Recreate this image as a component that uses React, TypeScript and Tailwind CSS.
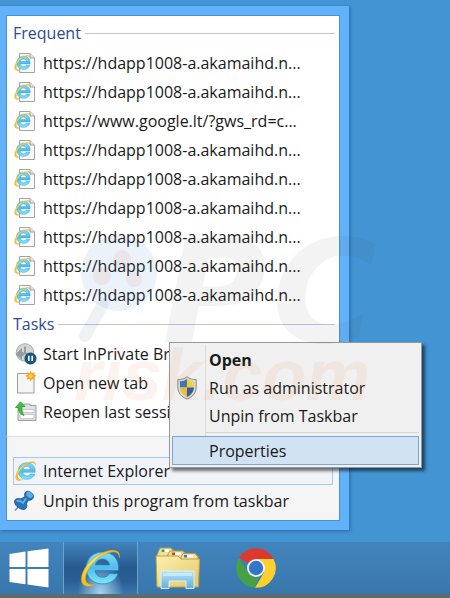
import type { ReactNode } from "react";

const frequent = [
  "https://hdapp1008-a.akamaihd.n...",
  "https://hdapp1008-a.akamaihd.n...",
  "https://www.google.lt/?gws_rd=c...",
  "https://hdapp1008-a.akamaihd.n...",
  "https://hdapp1008-a.akamaihd.n...",
  "https://hdapp1008-a.akamaihd.n...",
  "https://hdapp1008-a.akamaihd.n...",
  "https://hdapp1008-a.akamaihd.n...",
  "https://hdapp1008-a.akamaihd.n...",
];

function IeShape() {
  return (
    <>
      <defs>
        <linearGradient id="ie-blue" x1="0" y1="0" x2="0" y2="1">
          <stop offset="0" stopColor="#7fdcf8" />
          <stop offset="0.5" stopColor="#4fbdec" />
          <stop offset="1" stopColor="#7be6fb" />
        </linearGradient>
        <linearGradient id="ie-gold" x1="0" y1="1" x2="1" y2="0">
          <stop offset="0" stopColor="#f3b81c" />
          <stop offset="0.5" stopColor="#fbe25a" />
          <stop offset="1" stopColor="#eeb41d" />
        </linearGradient>
      </defs>
      <path
        fill="url(#ie-blue)"
        stroke="#2184bd"
        strokeWidth="0.7"
        fillRule="evenodd"
        d="M22 5C12.500 5 6 11.500 6 20.500S12.500 36 22 36C29.500 36 35 32 37 26H28.500C27.300 28.500 25 29.500 22 29.500C18 29.500 15 27 14.800 23H37.500C38.800 12.500 32.500 5 22 5ZM15 17.500C15.700 14 18.300 11.800 22 11.800S28.400 14 28.800 17.500Z"
      />
      <path
        fill="url(#ie-gold)"
        stroke="#cf9a17"
        strokeWidth="0.5"
        d="M38.500 10.500C40 4 34 1.500 25 4.500C14 8 3.500 18.500 1.500 29C0 38 7 40.500 14.500 36.500C8.500 37.500 4.500 35 5.500 29C7 20 16 10 25.500 6.500C33 3.700 38 4.500 38.500 10.500Z"
      />
    </>
  );
}

function IeIcon({ className }: { className: string }) {
  return (
    <svg viewBox="0 0 41 41" className={className} aria-hidden="true">
      <IeShape />
    </svg>
  );
}

function PageIcon() {
  return (
    <svg viewBox="0 0 22 22" className="size-[22px]" aria-hidden="true">
      <path d="M5.500 1.500H16L20.500 6V20.500H5.500Z" fill="#fafafa" stroke="#a3a3a3" />
      <path d="M16 1.500V6H20.500" fill="#e5e5e5" stroke="#a3a3a3" />
      <g transform="translate(0 2) scale(0.43)">
        <IeShape />
      </g>
    </svg>
  );
}

function InPrivateIcon() {
  return (
    <svg viewBox="0 0 22 22" className="size-[22px] overflow-visible" aria-hidden="true">
      <circle cx="12" cy="9.500" r="8.800" fill="#d3d6d8" stroke="#a7abad" />
      <path d="M12 3.500V10L16 12" fill="none" stroke="#8a9094" strokeWidth="1.600" />
      <path d="M2.500 11L9 5V8.500L12.500 11L9 13.500V17Z" fill="#979b9e" />
      <circle cx="17.500" cy="15.500" r="5.500" fill="#145a87" stroke="#0b4166" />
      <path d="M15.800 12.800V18M19.200 12.800V18" stroke="#fff" strokeWidth="1.600" />
    </svg>
  );
}

function NewTabIcon() {
  return (
    <svg viewBox="0 0 22 22" className="size-[22px] overflow-visible" aria-hidden="true">
      <path d="M4.500 1.500H21V21H4.500Z" fill="#f5f5f5" stroke="#9c9c9c" />
      <path
        d="M17.500 -1.500L18.800 1.200L21.500 0L20.800 2.800L23.800 3.800L20.900 5L22 7.800L19 6.900L17.700 9.500L16.500 6.700L13.500 7.800L14.700 5L12 3.700L14.800 2.700L13.800 0L16.500 1.200Z"
        fill="#f9a51c"
      />
      <circle cx="17.800" cy="4" r="2" fill="#ffd24a" />
    </svg>
  );
}

function ReopenIcon() {
  return (
    <svg viewBox="0 0 22 22" className="size-[22px] overflow-visible" aria-hidden="true">
      <path d="M5 4.500H11V3H17V4.500H23V19.500H5Z" fill="#dfe2e5" stroke="#9a9fa3" />
      <path d="M10 8.500H21V11.500H10ZM7 13.500H21V17.500H7Z" fill="#fff" stroke="#b4b9bd" strokeWidth="0.700" />
      <path d="M2.500 6.500L7.500 0.800L12 5.500H9.500C8.500 8 8.500 11 11 14.500C6.500 13 5 9 5.500 6.500Z" fill="#3fc23b" stroke="#249122" strokeWidth="0.700" />
    </svg>
  );
}

function PinIcon() {
  return (
    <svg viewBox="0 0 22 22" className="size-[22px]" aria-hidden="true">
      <path d="M2 20.500L8 14" stroke="#7c8b99" strokeWidth="1.500" />
      <path d="M1.500 10.500C3 8 6 8 8 9L12 6.500C10.500 3 13 0.500 16 1.500C19.500 2.500 21.500 6 20 8.500C19 10 17 10.500 15.500 10L13.500 13.500C14.500 16.500 13.500 19 11 19.500C6 19.500 1 15 1.500 10.500Z" fill="#2676bd" stroke="#174f8a" strokeWidth="0.800" />
      <ellipse cx="16.500" cy="4.800" rx="3.600" ry="2.600" transform="rotate(40 16.500 4.800)" fill="#5cabe5" />
      <path d="M3.500 11C6 10.500 8 11 10 13L13 8.500" fill="none" stroke="#68b2e8" strokeWidth="1.600" />
    </svg>
  );
}

function ShieldIcon() {
  return (
    <svg viewBox="0 0 20 24" className="h-6 w-5" aria-hidden="true">
      <defs>
        <clipPath id="shield-clip">
          <path d="M10 3C12 4.500 14.500 5.300 17 5.300V11C17 15.500 14 19 10 21C6 19 3 15.500 3 11V5.300C5.500 5.300 8 4.500 10 3Z" />
        </clipPath>
      </defs>
      <path d="M10 0.800C12.500 2.800 15.500 3.600 19.200 3.600V11C19.200 17 15.500 21 10 23.200C4.500 21 0.800 17 0.800 11V3.600C4.500 3.600 7.500 2.800 10 0.800Z" fill="#d7dadd" stroke="#868c92" />
      <g clipPath="url(#shield-clip)">
        <path d="M0 0H10V11.500H0Z" fill="#3276bf" />
        <path d="M10 0H20V11.500H10Z" fill="#f6d340" />
        <path d="M0 11.500H10V24H0Z" fill="#eec02e" />
        <path d="M10 11.500H20V24H10Z" fill="#245da5" />
      </g>
    </svg>
  );
}

function StartIcon() {
  return (
    <svg viewBox="0 0 40 40" className="size-10" aria-hidden="true">
      <path fill="#fff" d="M0.500 6L16.500 3.500V19H0.500ZM18.500 3.200L39.500 0.500V19H18.500ZM0.500 21H16.500V36.300L0.500 34ZM18.500 21H39.500V39.500L18.500 36.600Z" />
    </svg>
  );
}

function FolderIcon() {
  return (
    <svg viewBox="0 0 46 44" className="h-11 w-[46px]" aria-hidden="true">
      <defs>
        <linearGradient id="folder" x1="0" y1="0" x2="1" y2="1">
          <stop offset="0" stopColor="#fbf0b1" />
          <stop offset="1" stopColor="#e6c865" />
        </linearGradient>
        <linearGradient id="tray" x1="0" y1="0" x2="0" y2="1">
          <stop offset="0" stopColor="#b9e3f6" />
          <stop offset="1" stopColor="#62aedd" />
        </linearGradient>
      </defs>
      <path d="M2 9L5 2H16L19 6L41 8V20H2Z" fill="#efe1a0" stroke="#b99c42" />
      <path d="M6.500 3.500H14V6H6.500Z" fill="#fff" />
      <path d="M6.500 3.500H9.500V6H6.500Z" fill="#3aa34a" />
      <path d="M12 10L15 5H28L31 9L43 10V20H12Z" fill="#f0dc91" stroke="#b99c42" />
      <path d="M17 6.500H26V9H17Z" fill="#fff" />
      <path d="M17 6.500H20V9H17Z" fill="#cf3e2c" />
      <path d="M26 11L28 7.500H40L43 11V20H26Z" fill="#f3e09a" stroke="#b99c42" />
      <path d="M29 9H38V11.500H29Z" fill="#fff" />
      <path d="M29 9H32V11.500H29Z" fill="#3478c4" />
      <path d="M1 10H23L26 13H44.500L43.500 41H2Z" fill="url(#folder)" stroke="#bfa044" />
      <path d="M6 25H39V42.500H31V35H14V42.500H6Z" fill="url(#tray)" stroke="#d8f1fb" />
      <path d="M8 27H37V30H8Z" fill="#d5effa" opacity="0.700" />
    </svg>
  );
}

function ChromeIcon() {
  return (
    <svg viewBox="0 0 40 40" className="size-10" aria-hidden="true">
      <path d="M20 20L3.100 9.800A19.700 19.700 0 0 1 37.500 11H20Z" fill="#dc3a2e" />
      <path d="M20 11H37.500A19.700 19.700 0 0 1 19 39.700L28 24.500Z" fill="#fbd02f" />
      <path d="M3.100 9.800L12.200 24.500C14.500 28.500 19 30 23 28.800L19 39.700A19.700 19.700 0 0 1 3.100 9.800Z" fill="#45a047" />
      <circle cx="20" cy="20" r="9" fill="#f4f4f4" />
      <circle cx="20" cy="20" r="7.200" fill="#3277cb" />
    </svg>
  );
}

function Heading({ children }: { children: ReactNode }) {
  return (
    <h2 className="mr-1 flex h-[30px] items-center gap-1 text-base leading-6 text-[#2c4a94]">
      {children}
      <span className="h-px flex-1 bg-[#b9c8de]" />
    </h2>
  );
}

function Task({ icon, children }: { icon: ReactNode; children: ReactNode }) {
  return (
    <li>
      <button className="flex h-[29px] w-full items-center gap-2 text-left whitespace-nowrap">
        {icon}
        {children}
      </button>
    </li>
  );
}

function MenuItem({ icon, children }: { icon?: ReactNode; children: ReactNode }) {
  return (
    <button role="menuitem" className="flex h-7 w-full items-center text-left">
      <span className="flex w-[37px] justify-center pr-2">{icon}</span>
      {children}
    </button>
  );
}

function ContextMenu() {
  return (
    <div
      role="menu"
      className="absolute top-[336px] left-[169px] w-[253px] border border-[#979797] bg-[#f0f0f0] p-0.5 shadow-[3px_3px_3px_rgba(0,0,0,0.55)]"
    >
      <div className="bg-[linear-gradient(to_right,transparent_33px,#dcdcdc_33px,#dcdcdc_34px,transparent_34px)] pt-px">
        <MenuItem>
          <b>Open</b>
        </MenuItem>
        <MenuItem icon={<ShieldIcon />}>Run as administrator</MenuItem>
        <MenuItem>Unpin from Taskbar</MenuItem>
        <hr className="mt-0.5 mb-[3px] ml-[34px] border-[#d4d4d4]" />
        <div className="border border-[#78a9d6] bg-[#d1e2f2]">
          <button role="menuitem" className="flex h-[27px] w-full items-center pl-9 text-left">
            Properties
          </button>
        </div>
      </div>
    </div>
  );
}

function Watermark() {
  return (
    <svg
      viewBox="0 0 450 598"
      className="pointer-events-none absolute top-0 left-0 w-[450px] font-bold italic"
      aria-hidden="true"
    >
      <path d="M103 304L85 336" stroke="#43648b" strokeWidth="12" strokeLinecap="round" opacity="0.080" />
      <circle cx="119" cy="273" r="38" fill="#3f83c4" opacity="0.100" />
      <g fill="#e0442c" opacity="0.070">
        <circle cx="122" cy="259" r="9" />
        <circle cx="102" cy="276" r="9" />
        <circle cx="134" cy="279" r="8" />
      </g>
      <g className="font-['DejaVu_Sans',sans-serif]" fill="#444" opacity="0.060" fontSize="143">
        <text x="162" y="342">P</text>
        <text x="272" y="342">C</text>
      </g>
      <text className="font-['Liberation_Sans',sans-serif]" x="74" y="400" fill="#f07832" opacity="0.080" fontSize="72">
        risk.com
      </text>
    </svg>
  );
}

export default function App() {
  return (
    <div className="relative flex min-h-screen flex-col overflow-hidden bg-[#4294d2] font-['Open_Sans','Noto_Sans',sans-serif] text-base leading-6 text-[#1a1a1a]">
      <main className="relative pt-1.5 pb-3">
        <section className="w-[349px] max-w-full border-y-[9px] border-r-[9px] border-l-[6px] border-[#62b1fb] bg-white shadow-[1px_1px_3px_rgba(0,40,90,0.4)]">
          <div className="border border-b-0 border-[#4b91cf] pb-[10px] pl-1.5">
            <div className="pt-0.5">
              <Heading>Frequent</Heading>
            </div>
            <ul>
              {frequent.map((url, i) => (
                <li key={i}>
                  <a href="#" className="flex h-[29px] items-center gap-[7px] pl-px whitespace-nowrap">
                    <PageIcon />
                    {url}
                  </a>
                </li>
              ))}
            </ul>
            <Heading>Tasks</Heading>
            <ul>
              <Task icon={<InPrivateIcon />}>Start InPrivate Browsing</Task>
              <Task icon={<NewTabIcon />}>Open new tab</Task>
              <Task icon={<ReopenIcon />}>Reopen last session</Task>
            </ul>
          </div>
          <div className="border border-[#4b91cf] border-t-[#d3dfec] bg-[#f5f5f5] px-1.5 pt-5 pb-1">
            <button className="flex h-7 w-full items-center gap-1.5 border border-[#aac6e5] bg-[#f0f4f9] pl-px text-left">
              <IeIcon className="size-[22px]" />
              Internet Explorer
            </button>
            <button className="flex h-[31px] w-full items-center gap-2 text-left whitespace-nowrap">
              <PinIcon />
              Unpin this program from taskbar
            </button>
          </div>
        </section>
        <div className="absolute top-1.5 left-0">
          <ContextMenu />
        </div>
      </main>

      <nav className="mt-auto flex h-14 border-b-4 border-[#5b6b70] bg-linear-to-b from-[#4284bd] to-[#3977ab]">
        <button aria-label="Start" className="flex w-[63px] items-center pl-[9px]">
          <StartIcon />
        </button>
        <button
          aria-label="Internet Explorer"
          className="flex w-[75px] items-center justify-center border-x border-[#6aa3d2] bg-[radial-gradient(ellipse_at_bottom,#a9d4ee_0%,transparent_45%),linear-gradient(to_bottom,#4284bd,#28598f_50%,#2a5e94_75%,#3977ab)]"
        >
          <IeIcon className="size-[42px]" />
        </button>
        <button aria-label="File Explorer" className="flex w-[79px] items-center justify-center">
          <FolderIcon />
        </button>
        <button aria-label="Chrome" className="flex w-[78px] items-center justify-center">
          <ChromeIcon />
        </button>
      </nav>
      <Watermark />
    </div>
  );
}
